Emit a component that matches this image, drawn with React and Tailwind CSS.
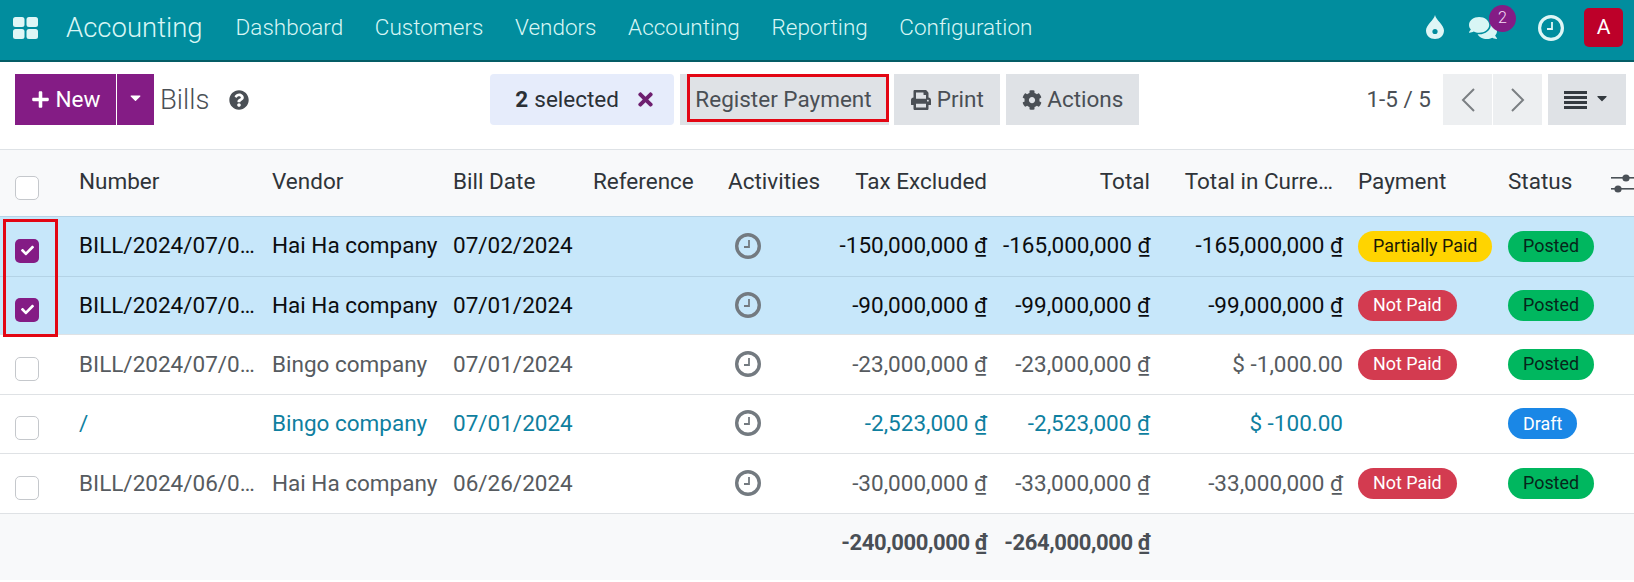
import React from "react";
import { FaPlus, FaCaretDown, FaQuestionCircle, FaPrint, FaCog, FaTimes, FaComments, FaCheck } from "react-icons/fa";

const Clock = ({ size = 26, color = "#737a80", stroke = 3.4 }) => (
  <svg width={size} height={size} viewBox="0 0 26 26" fill="none">
    <circle cx="13" cy="13" r={13 - stroke / 2} stroke={color} strokeWidth={stroke} />
    <path d="M14 7v7H9" stroke={color} strokeWidth="1.8" />
  </svg>
);

const Grid = () => (
  <svg width="25" height="22" viewBox="0 0 25 22" fill="#dff6f6">
    <rect x="0" y="0" width="11.5" height="10" rx="2.5" />
    <rect x="13.5" y="0" width="11.5" height="10" rx="2.5" />
    <rect x="0" y="12" width="11.5" height="10" rx="2.5" />
    <rect x="13.5" y="12" width="11.5" height="10" rx="2.5" />
  </svg>
);

const Drop = () => (
  <svg width="18" height="24" viewBox="0 0 18 24" className="mb-[2px]">
    <path d="M9 0C10 5 18 10 18 15.5 18 20.5 14 24 9 24S0 20.5 0 15.5C0 10 8 5 9 0Z" fill="#dff6f6" />
    <circle cx="9" cy="16.5" r="2.6" fill="#018d9e" />
  </svg>
);

const Sliders = () => (
  <svg width="23" height="20" viewBox="0 0 23 20" fill="#4b5157">
    <rect x="0" y="3" width="23" height="1.6" />
    <rect x="0" y="14" width="23" height="1.6" />
    <circle cx="15" cy="4" r="3.6" />
    <circle cx="7" cy="15" r="3.6" />
  </svg>
);

const Chevron = ({ dir }) => (
  <svg width="14" height="24" viewBox="0 0 14 24" fill="none" stroke="#7b7f83" strokeWidth="2">
    <path d={dir === "l" ? "M13 1 2 12l11 11" : "M1 1l11 11L1 23"} />
  </svg>
);

const Check = ({ on }) =>
  on ? (
    <span className="flex h-6 w-6 items-center justify-center rounded-[5px] bg-[#841c85] text-[13px] text-white">
      <FaCheck />
    </span>
  ) : (
    <span className="block h-6 w-6 rounded-[5px] border border-[#c5c8cc] bg-white" />
  );

const Pill = ({ c, children }) => (
  <span className={`inline-flex h-[31px] items-center whitespace-nowrap rounded-full px-[15px] align-middle text-[17.9px] ${c}`}>{children}</span>
);

const green = "bg-[#00b75f] text-[#06261a]";
const red = "bg-[#d33b50] text-white";
const yellow = "bg-[#ffd400] text-[#1c1a05]";
const blue = "bg-[#1a87e6] text-white";

const rows = [
  { h: "h-[60px]", sel: true, n: "BILL/2024/07/0…", v: "Hai Ha company", d: "07/02/2024", t: "-150,000,000 ₫", to: "-165,000,000 ₫", c: "-165,000,000 ₫", p: ["Partially Paid", yellow], s: ["Posted", green] },
  { h: "h-[58.5px]", sel: true, n: "BILL/2024/07/0…", v: "Hai Ha company", d: "07/01/2024", t: "-90,000,000 ₫", to: "-99,000,000 ₫", c: "-99,000,000 ₫", p: ["Not Paid", red], s: ["Posted", green] },
  { h: "h-[59.5px]", n: "BILL/2024/07/0…", v: "Bingo company", d: "07/01/2024", t: "-23,000,000 ₫", to: "-23,000,000 ₫", c: "$ -1,000.00", p: ["Not Paid", red], s: ["Posted", green] },
  { h: "h-[59.5px]", draft: true, n: "/", v: "Bingo company", d: "07/01/2024", t: "-2,523,000 ₫", to: "-2,523,000 ₫", c: "$ -100.00", s: ["Draft", blue] },
  { h: "h-[59.5px]", n: "BILL/2024/06/0…", v: "Hai Ha company", d: "06/26/2024", t: "-30,000,000 ₫", to: "-33,000,000 ₫", c: "-33,000,000 ₫", p: ["Not Paid", red], s: ["Posted", green] },
];

const nav = ["Dashboard", "Customers", "Vendors", "Accounting", "Reporting", "Configuration"];

export default function App() {
  return (
    <div className="relative h-[582px] w-[1634px] overflow-hidden bg-white font-['Roboto',sans-serif] text-[22.5px] leading-none text-[#4a4f55]">
      {/* Top bar */}
      <header className="flex h-[62px] items-center border-b-2 border-[#045d66] bg-[#018d9e] pb-[5px] pl-[13px] pr-[11px] text-[#d8f6f5]">
        <Grid />
        <span className="ml-[28px] text-[27.5px] font-light">Accounting</span>
        <nav className="ml-[33px] flex gap-[31.6px] text-[22.5px] font-light">
          {nav.map((n) => (
            <span key={n}>{n}</span>
          ))}
        </nav>
        <div className="ml-auto flex items-center">
          <Drop />
          <span className="relative ml-[25px] block h-[28px]">
            <FaComments className="text-[28px]" />
            <span className="absolute left-[20px] top-[-9px] flex h-[27px] w-[27px] items-center justify-center rounded-full bg-[#841c85] text-[16px] font-light text-[#f6dcf6]">2</span>
          </span>
          <span className="ml-[41px]"><Clock size={26} color="#dff6f6" stroke={3.2} /></span>
          <span className="ml-[20px] flex h-[39px] w-[39px] items-center justify-center rounded-[5px] bg-[#bd0029] text-[21px] text-white">A</span>
        </div>
      </header>

      {/* Toolbar */}
      <div className="flex h-[88px] items-start border-b border-[#dee2e6] pl-[15px] pr-2 pt-[12px]">
        <button className="flex h-[51px] w-[101px] items-center justify-center gap-[6px] bg-[#841c85] text-white">
          <FaPlus className="text-[19px]" /> New
        </button>
        <button className="ml-px flex h-[51px] w-[37px] items-center justify-center bg-[#841c85] text-white">
          <FaCaretDown className="mb-1 text-[17px]" />
        </button>
        <span className="ml-[6px] flex h-[51px] items-center text-[27.5px] font-light">Bills</span>
        <FaQuestionCircle className="ml-[20px] mt-[16px] text-[20px]" />
        <div className="ml-[241px] flex h-[51px] w-[184px] items-center rounded-[4px] bg-[#e6ecfb] pl-[25px] text-[#2b3036]">
          <b className="font-bold">2</b>
          <span className="ml-[6px]">selected</span>
          <FaTimes className="ml-[16px] text-[21px] text-[#6e1f6f]" />
        </div>
        <button className="relative ml-[6px] flex h-[51px] w-[209px] items-center bg-[#dfe2e6] pl-[15px]">
          Register Payment
          <span className="absolute left-[7px] top-0 h-[48px] w-[202px] border-[3px] border-[#e30613]" />
        </button>
        <button className="ml-[5px] flex h-[51px] w-[106px] items-center justify-center gap-[6px] bg-[#dfe2e6]">
          <FaPrint className="text-[20px]" /> Print
        </button>
        <button className="ml-[6px] flex h-[51px] w-[133px] items-center justify-center gap-[5px] bg-[#dfe2e6]">
          <FaCog className="text-[20px]" /> Actions
        </button>
        <span className="ml-auto flex h-[51px] items-center">1-5 / 5</span>
        <button className="ml-[12px] flex h-[51px] w-[49px] items-center justify-center bg-[#edeff1]"><Chevron dir="l" /></button>
        <button className="ml-px flex h-[51px] w-[49px] items-center justify-center bg-[#edeff1]"><Chevron dir="r" /></button>
        <button className="ml-[6px] flex h-[51px] w-[78px] items-center justify-center gap-[7px] bg-[#dfe2e6] text-[#343a40]">
          <span className="flex w-[23px] flex-col gap-[2px]">
            <i className="block h-[3px] bg-[#343a40]" />
            <i className="block h-[3px] bg-[#343a40]" />
            <i className="block h-[3px] bg-[#343a40]" />
            <i className="block h-[3px] bg-[#343a40]" />
          </span>
          <FaCaretDown className="mb-1 text-[16px]" />
        </button>
      </div>

      {/* Table */}
      <table className="w-[1634px] table-fixed border-collapse">
        <colgroup>
          <col className="w-[71px]" />
          <col className="w-[193px]" />
          <col className="w-[181px]" />
          <col className="w-[140px]" />
          <col className="w-[135px]" />
          <col className="w-[100px]" />
          <col className="w-[175px]" />
          <col className="w-[163px]" />
          <col className="w-[193px]" />
          <col className="w-[149px]" />
          <col className="w-[100px]" />
          <col className="w-[34px]" />
        </colgroup>
        <thead>
          <tr className="h-[66px] bg-[#f8f9fa] text-[#2f3439] [&>th]:px-2 [&>th]:pb-[2.5px] [&>th]:font-normal">
            <th className="!pb-0 !pl-[15px] !pt-[10px] text-left"><Check /></th>
            <th className="text-left">Number</th>
            <th className="text-left">Vendor</th>
            <th className="text-left">Bill Date</th>
            <th className="text-left">Reference</th>
            <th className="whitespace-nowrap text-left">Activities</th>
            <th className="whitespace-nowrap text-right">Tax Excluded</th>
            <th className="text-right">Total</th>
            <th className="!pr-[18px] whitespace-nowrap text-right">Total in Curre…</th>
            <th className="!pl-[7px] text-left">Payment</th>
            <th className="text-left">Status</th>
            <th className="!pl-[11px] !pr-0 !pt-[4px] text-left"><Sliders /></th>
          </tr>
        </thead>
        <tbody>
          {rows.map((r, i) => (
            <tr
              key={i}
              className={`${r.h} border-t [&>td]:px-2 ${r.sel ? "border-[#b4d3e6] bg-[#c7e7fa] text-[#0b0d0f]" : "border-[#dfe2e5]"} ${r.draft ? "text-[#0f7f9f]" : ""} ${!r.sel && !r.draft ? "text-[#565b60]" : ""}`}
            >
              <td className="!pl-[15px] pt-[9px]"><Check on={r.sel} /></td>
              <td className="whitespace-nowrap pb-[1px]">{r.n}</td>
              <td className="whitespace-nowrap pb-[1px]">{r.v}</td>
              <td className="pb-[1px]">{r.d}</td>
              <td />
              <td className="pb-[1px]"><span className="ml-[7px] block w-[26px]"><Clock /></span></td>
              <td className="whitespace-nowrap pb-[1px] text-right">{r.t}</td>
              <td className="whitespace-nowrap pb-[1px] text-right">{r.to}</td>
              <td className="whitespace-nowrap pb-[1px] text-right">{r.c}</td>
              <td className="!pl-[7px]">{r.p && <Pill c={r.p[1]}>{r.p[0]}</Pill>}</td>
              <td>{r.s && <Pill c={r.s[1]}>{r.s[0]}</Pill>}</td>
              <td />
            </tr>
          ))}
        </tbody>
        <tfoot>
          <tr className="h-[67px] border-t border-[#dfe2e5] bg-[#f8f9fa] text-[22px] font-bold tracking-[-0.4px] text-[#4a4f55] [&>td]:px-2 [&>td]:pb-[7px]">
            <td colSpan={6} />
            <td className="whitespace-nowrap text-right">-240,000,000 ₫</td>
            <td className="whitespace-nowrap text-right">-264,000,000 ₫</td>
            <td colSpan={4} />
          </tr>
        </tfoot>
      </table>

      {/* Annotation over the checkboxes */}
      <span className="absolute left-[3px] top-[219px] h-[118px] w-[55px] border-[3px] border-[#e30613]" />
    </div>
  );
}
